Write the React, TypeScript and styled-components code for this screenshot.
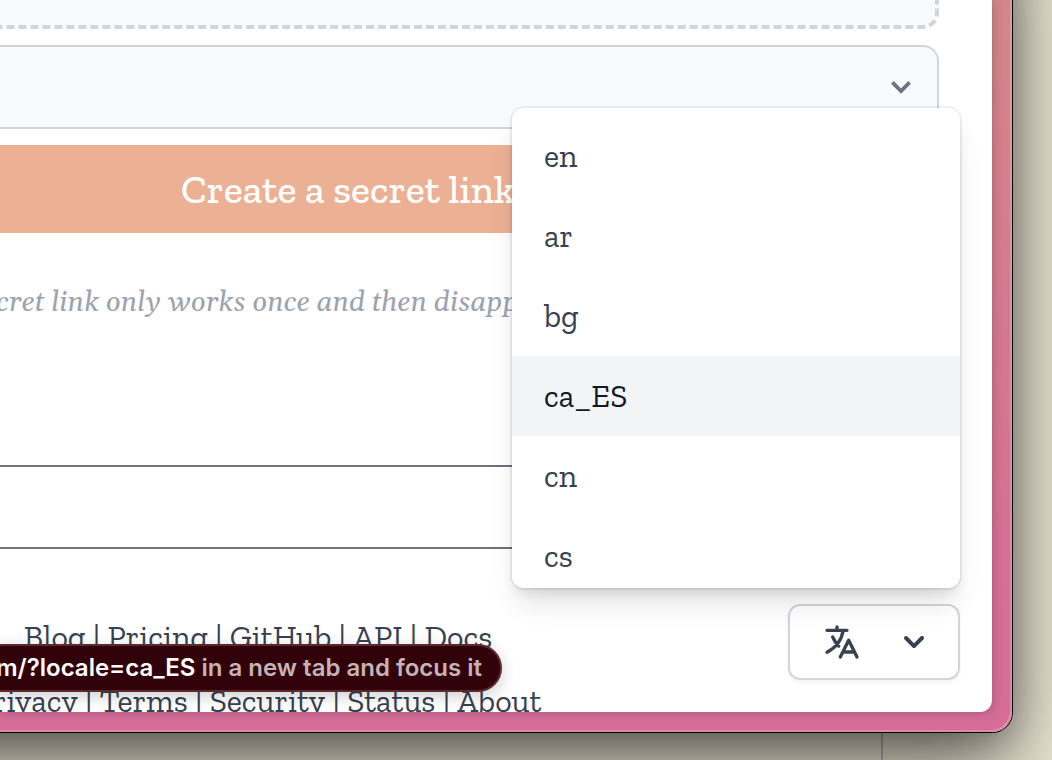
import React from "react";
import styled, { createGlobalStyle } from "styled-components";

const slab = `"Zilla Slab", "Liberation Serif", serif`;

const GlobalStyle = createGlobalStyle`
  *, *::before, *::after { box-sizing: border-box; }
  body { margin: 0; font-family: ${slab}; color: #374151; }
`;

const Desktop = styled.div`
  display: flex;
  flex-direction: column;
  min-height: 100vh;
  overflow: hidden;
  background: #ece5d4;
`;

const BrowserWindow = styled.div`
  position: relative;
  margin: -80px 40px 0 -200px;
  padding: 80px 20px 20px 200px;
  border-bottom-right-radius: 20px;
  background: linear-gradient(#d4878a 80px, #d66f95 80%, #d66d98);
  box-shadow:
    inset -2px -2px 0 rgba(255, 255, 255, 0.2),
    0 0 0 1px #000,
    0 8px 32px rgba(0, 0, 0, 0.2),
    0 30px 80px rgba(0, 0, 0, 0.6);
`;

const Page = styled.main`
  overflow: hidden;
  border-bottom-right-radius: 12px;
  background: #fff;
  box-shadow: 0 0 12px rgba(0, 0, 0, 0.25);
`;

const Form = styled.form`
  display: flex;
  flex-direction: column;
  gap: 16px;
  margin: 0 53px 0 -243px;
`;

const DropZone = styled.div`
  height: 29px;
  border: 4px dashed #d1d5db;
  border-top: 0;
  border-radius: 0 0 16px 16px;
  background: #f9fafb;
`;

const SelectWrap = styled.label`
  display: grid;
  align-items: center;
  > * { grid-area: 1 / 1; }
  > svg { justify-self: end; margin-right: 18px; pointer-events: none; }
`;

const Select = styled.select`
  appearance: none;
  width: 100%;
  height: 84px;
  padding: 0 32px;
  border: 2px solid #d1d5db;
  border-radius: 16px;
  background: #f9fafc;
  color: #374151;
  font: 32px ${slab};
`;

const SubmitButton = styled.button`
  height: 88px;
  border: 0;
  background: #ecb095;
  color: #fff;
  font: 500 40px/48px ${slab};
`;

const Hint = styled.p`
  margin: 50px 0 0 -4px;
  color: #9ca3af;
  font: italic 28px/40px Georgia, Gelasio, "Liberation Serif", serif;
  white-space: nowrap;
`;

const Banner = styled.section`
  height: 84px;
  margin: 142px 53px 0 0;
  border: solid #6b7280;
  border-width: 2px 0;
`;

const Footer = styled.footer`
  display: flex;
  justify-content: space-between;
  height: 163px;
  padding: 55px 32px 32px 0;
`;

const FooterNav = styled.nav`
  display: flex;
  flex-direction: column;
  gap: 24px;
  width: 516px;
  padding-top: 13px;
`;

const LinkRow = styled.div`
  display: flex;
  justify-content: center;
  font-size: 32px;
  line-height: 40px;
  white-space: pre;
`;

const FooterLink = styled.a`
  color: inherit;
  text-decoration: none;
`;

const LocaleSwitcher = styled.div`
  position: relative;
`;

const LocaleButton = styled.button`
  display: flex;
  align-items: center;
  gap: 32px;
  height: 76px;
  padding: 0 24px 0 32px;
  border: 2px solid #d1d5db;
  border-radius: 12px;
  background: transparent;
  color: #374151;
  box-shadow: 0 2px 4px rgba(0, 0, 0, 0.05);
`;

const LocaleMenu = styled.ul`
  position: absolute;
  right: 0;
  bottom: calc(100% + 16px);
  width: 448px;
  height: 480px;
  margin: 0;
  padding: 8px 0;
  overflow: hidden;
  list-style: none;
  border-radius: 12px;
  background: #fff;
  box-shadow:
    0 0 0 2px rgba(0, 0, 0, 0.06),
    0 20px 30px -6px rgba(0, 0, 0, 0.12),
    0 8px 12px -4px rgba(0, 0, 0, 0.1);
`;

const LocaleLink = styled.a<{ $active?: boolean }>`
  display: block;
  padding: 20px 32px;
  background: ${(p) => (p.$active ? "#f3f4f6" : "transparent")};
  color: ${(p) => (p.$active ? "#111827" : "#374151")};
  font-size: 32px;
  line-height: 40px;
  text-decoration: none;
`;

const StatusBubble = styled.div`
  position: absolute;
  left: 196px;
  bottom: 40px;
  height: 48px;
  padding: 0 18px 0 0;
  border: 2px solid #5b292e;
  border-left: 0;
  border-radius: 0 24px 24px 0;
  background: #310209;
  color: #c5b3b5;
  font: 600 24px/44px Inter, sans-serif;
  white-space: nowrap;
  box-shadow: 0 4px 16px rgba(0, 0, 0, 0.2);
`;

const StatusUrl = styled.strong`
  color: #fff;
  font-weight: 600;
`;

const Wallpaper = styled.div`
  flex: 1;
  min-height: 28px;
  margin-right: 169px;
  border-right: 2px solid #b9b6ae;
`;

const TranslateIcon = () => (
  <svg width="40" height="40" viewBox="0 0 24 24" fill="none" stroke="currentColor" strokeWidth="2" strokeLinecap="round" strokeLinejoin="round" aria-hidden="true">
    <path d="M3 5h12M9 3v2m1.048 9.5A18.022 18.022 0 016.412 9m6.088 9h7M11 21l5-10 5 10M12.751 5C11.783 10.77 8.07 15.61 3 18.129" />
  </svg>
);

const ChevronIcon = () => (
  <svg width="40" height="40" viewBox="0 0 20 20" fill="currentColor" aria-hidden="true">
    <path d="M5.293 7.293a1 1 0 011.414 0L10 10.586l3.293-3.293a1 1 0 111.414 1.414l-4 4a1 1 0 01-1.414 0l-4-4a1 1 0 010-1.414z" />
  </svg>
);

const SelectArrow = () => (
  <svg width="40" height="40" viewBox="0 0 20 20" fill="none" stroke="#6b7280" strokeWidth="1.9" aria-hidden="true">
    <path d="M5.7 7.7l4.3 4.3 4.3-4.3" />
  </svg>
);

const locales = ["en", "ar", "bg", "ca_ES", "cn", "cs"];
const activeLocale = "ca_ES";
const footerRows = [
  ["Blog", "Pricing", "GitHub", "API", "Docs"],
  ["Privacy", "Terms", "Security", "Status", "About"],
];

export default function App() {
  return (
    <>
      <GlobalStyle />
      <Desktop>
        <BrowserWindow>
          <Page>
            <Form>
              <DropZone />
              <SelectWrap>
                <Select aria-label="Expiration">
                  <option></option>
                </Select>
                <SelectArrow />
              </SelectWrap>
              <SubmitButton type="button">Create a secret link</SubmitButton>
            </Form>
            <Hint>cret link only works once and then disapp</Hint>
            <Banner />
            <Footer>
              <FooterNav aria-label="Footer">
                {footerRows.map((row) => (
                  <LinkRow key={row[0]}>
                    {row.map((label, i) => (
                      <React.Fragment key={label}>
                        {i > 0 && <span> | </span>}
                        <FooterLink href="#">{label}</FooterLink>
                      </React.Fragment>
                    ))}
                  </LinkRow>
                ))}
              </FooterNav>
              <LocaleSwitcher>
                <LocaleButton type="button" aria-label="Language" aria-expanded="true">
                  <TranslateIcon />
                  <ChevronIcon />
                </LocaleButton>
                <LocaleMenu>
                  {locales.map((code) => (
                    <li key={code}>
                      <LocaleLink href={`?locale=${code}`} $active={code === activeLocale}>
                        {code}
                      </LocaleLink>
                    </li>
                  ))}
                </LocaleMenu>
              </LocaleSwitcher>
            </Footer>
          </Page>
          <StatusBubble role="status">
            <StatusUrl>m/?locale=ca_ES</StatusUrl> in a new tab and focus it
          </StatusBubble>
        </BrowserWindow>
        <Wallpaper />
      </Desktop>
    </>
  );
}
